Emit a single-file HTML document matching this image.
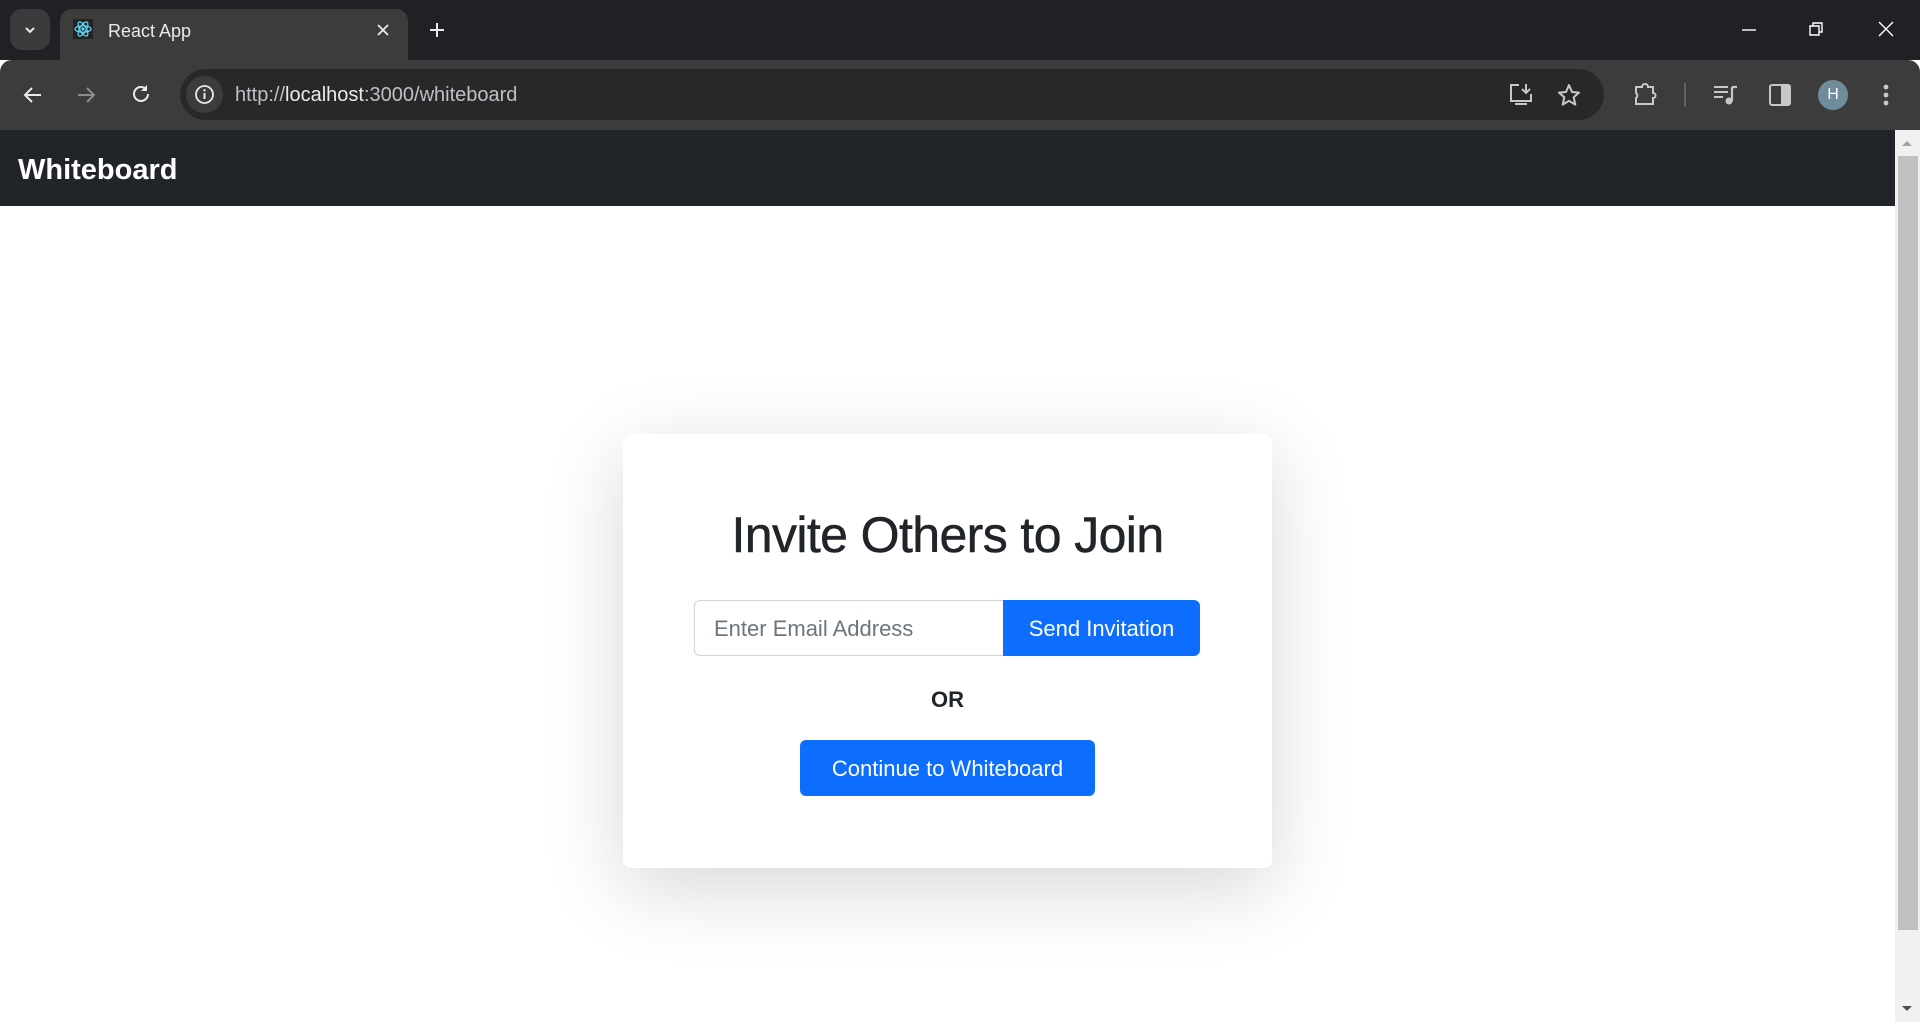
<!DOCTYPE html>
<html><head><meta charset="utf-8"><style>
*{box-sizing:border-box;margin:0;padding:0}
body{width:1920px;height:1022px;overflow:hidden;background:#fff;font-family:"Liberation Sans",sans-serif;position:relative}
.abs{position:absolute}
#tabs{left:0;top:0;width:1920px;height:60px;background:#202124}
#tbar{left:0;top:60px;width:1920px;height:70px;background:#3c3c3c;border-top-left-radius:12px;border-top-right-radius:12px}
#nav{left:0;top:130px;width:1895px;height:76px;background:#212529}
svg{position:absolute}
</style></head><body>
<div id="tabs" class="abs"></div>
<div class="abs" style="left:10px;top:9px;width:40px;height:41px;background:#3a3b3d;border-radius:12px"></div>
<svg style="left:22px;top:22px" width="16" height="16" viewBox="0 0 16 16"><path d="M4 6l4 4 4-4" stroke="#e8eaed" stroke-width="2" fill="none"/></svg>
<div class="abs" style="left:60px;top:9px;width:348px;height:55px;background:#3c3c3c;border-radius:12px 12px 0 0"></div>
<svg style="left:73px;top:19px" width="20" height="20" viewBox="0 0 20 20"><rect width="20" height="20" fill="#222"/><g stroke="#61dafb" stroke-width="1.2" fill="none"><ellipse cx="10" cy="10" rx="8" ry="3.2"/><ellipse cx="10" cy="10" rx="8" ry="3.2" transform="rotate(60 10 10)"/><ellipse cx="10" cy="10" rx="8" ry="3.2" transform="rotate(120 10 10)"/></g><circle cx="10" cy="10" r="1.6" fill="#61dafb"/></svg>
<div class="abs" style="left:108px;top:21px;color:#e8eaed;font-size:18px">React App</div>
<svg style="left:376px;top:23px" width="14" height="14" viewBox="0 0 14 14"><path d="M2 2l10 10M12 2L2 12" stroke="#e8eaed" stroke-width="1.8"/></svg>
<svg style="left:428px;top:21px" width="18" height="18" viewBox="0 0 18 18"><path d="M9 2v14M2 9h14" stroke="#e8eaed" stroke-width="2"/></svg>
<svg style="left:1741px;top:22px" width="16" height="16"><path d="M1 8h14" stroke="#fff" stroke-width="1.4"/></svg>
<svg style="left:1808px;top:21px" width="16" height="16"><path d="M2 5h9v9H2zM5 5V2h9v9h-3" stroke="#fff" stroke-width="1.4" fill="none"/></svg>
<svg style="left:1877px;top:20px" width="18" height="18"><path d="M2 2l14 14M16 2L2 16" stroke="#fff" stroke-width="1.4"/></svg>
<div id="tbar" class="abs"></div>
<svg style="left:22px;top:84px" width="22" height="22" viewBox="0 0 22 22"><path d="M19 11H4M10 4l-7 7 7 7" stroke="#e8eaed" stroke-width="2" fill="none"/></svg>
<svg style="left:75px;top:84px" width="22" height="22" viewBox="0 0 22 22"><path d="M3 11h15M12 4l7 7-7 7" stroke="#8a8b8c" stroke-width="2" fill="none"/></svg>
<svg style="left:130px;top:83px" width="22" height="22" viewBox="0 0 22 22"><path d="M18 11a7 7 0 1 1-2.5-5.4" stroke="#e8eaed" stroke-width="2" fill="none"/><path d="M17 2v6h-6z" fill="#e8eaed"/></svg>
<div class="abs" style="left:180px;top:69px;width:1424px;height:51px;background:#282828;border-radius:26px"></div>
<div class="abs" style="left:186px;top:76px;width:37px;height:37px;background:#3c3c3c;border-radius:50%"></div>
<svg style="left:194px;top:84px" width="21" height="21" viewBox="0 0 21 21"><circle cx="10.5" cy="10.5" r="8.5" stroke="#e8eaed" stroke-width="1.8" fill="none"/><path d="M10.5 9v6" stroke="#e8eaed" stroke-width="2"/><circle cx="10.5" cy="6.3" r="1.2" fill="#e8eaed"/></svg>
<div class="abs" style="left:235px;top:84px;font-size:20px;color:#bdc1c6">http://<span style="color:#e8eaed">localhost</span>:3000/whiteboard</div>
<svg style="left:1508px;top:82px" width="26" height="26" viewBox="0 0 26 26"><path d="M11 3H3v16h20v-7M7 22h12" stroke="#c8c8c8" stroke-width="2" fill="none"/><path d="M18 2v9M14 7l4 4 4-4" stroke="#c8c8c8" stroke-width="2" fill="none"/></svg>
<svg style="left:1556px;top:82px" width="26" height="26" viewBox="0 0 26 26"><path d="M13 3l3 7 7 .6-5.3 4.7 1.6 7.3L13 18.8 6.7 22.6l1.6-7.3L3 10.6 10 10z" stroke="#c8c8c8" stroke-width="2" fill="none" stroke-linejoin="round"/></svg>
<svg style="left:1632px;top:81px" width="26" height="26" viewBox="0 0 26 26"><path d="M4 6h6a3 3 0 0 1 6 0h5v6a2.5 2.5 0 0 1 0 5v6H4v-6a3 3 0 0 0 0-5z" stroke="#c8c8c8" stroke-width="2" fill="none"/></svg>
<div class="abs" style="left:1684px;top:83px;width:2px;height:24px;background:#5f6368"></div>
<svg style="left:1712px;top:84px" width="26" height="22" viewBox="0 0 26 22"><path d="M2 3h14M2 8h14M2 13h9" stroke="#c8c8c8" stroke-width="2"/><path d="M20 3v14h0M20 3h5" stroke="#c8c8c8" stroke-width="2.2"/><circle cx="17" cy="17" r="3.5" fill="#c8c8c8"/></svg>
<svg style="left:1768px;top:83px" width="24" height="24" viewBox="0 0 24 24"><rect x="2" y="2" width="20" height="20" rx="2" stroke="#c8c8c8" stroke-width="2" fill="none"/><rect x="13" y="2" width="9" height="20" fill="#c8c8c8"/></svg>
<div class="abs" style="left:1818px;top:80px;width:30px;height:30px;border-radius:50%;background:#6f8c9b;color:#fff;font-size:16px;text-align:center;line-height:30px">H</div>
<svg style="left:1880px;top:82px" width="12" height="26"><circle cx="6" cy="5" r="2.4" fill="#c8c8c8"/><circle cx="6" cy="13" r="2.4" fill="#c8c8c8"/><circle cx="6" cy="21" r="2.4" fill="#c8c8c8"/></svg>
<div id="nav" class="abs"></div>
<div class="abs" style="left:18px;top:154px;color:#fff;font-size:29px;font-weight:bold">Whiteboard</div>
<div class="abs" style="left:1895px;top:130px;width:25px;height:892px;background:#f1f1f1"></div>
<div class="abs" style="left:1898px;top:156px;width:20px;height:774px;background:#c1c1c1"></div>
<svg style="left:1900px;top:138px" width="14" height="10"><path d="M2 8l5-5 5 5z" fill="#a3a3a3"/></svg>
<svg style="left:1900px;top:1004px" width="14" height="10"><path d="M2 2l5 5 5-5z" fill="#505050"/></svg>
<div class="abs" style="left:623px;top:434px;width:649px;height:434px;background:#fff;border-radius:8px;box-shadow:0 20px 80px rgba(0,0,0,.16)"></div>
<div class="abs" style="left:623px;top:506px;width:649px;text-align:center;font-size:50px;color:#212529;letter-spacing:-0.6px;-webkit-text-stroke:0.5px #212529">Invite Others to Join</div>
<div class="abs" style="left:694px;top:600px;width:310px;height:56px;border:1px solid #ced4da;border-radius:6px 0 0 6px;padding-left:19px;line-height:56px;font-size:22px;color:#6c757d">Enter Email Address</div>
<div class="abs" style="left:1003px;top:600px;width:197px;height:56px;background:#0d6efd;border-radius:0 6px 6px 0;color:#fff;font-size:22px;text-align:center;line-height:58px">Send Invitation</div>
<div class="abs" style="left:623px;top:687px;width:649px;text-align:center;font-size:22px;font-weight:bold;color:#212529">OR</div>
<div class="abs" style="left:800px;top:740px;width:295px;height:56px;background:#0d6efd;border-radius:6px;color:#fff;font-size:22px;text-align:center;line-height:58px">Continue to Whiteboard</div>
</body></html>
